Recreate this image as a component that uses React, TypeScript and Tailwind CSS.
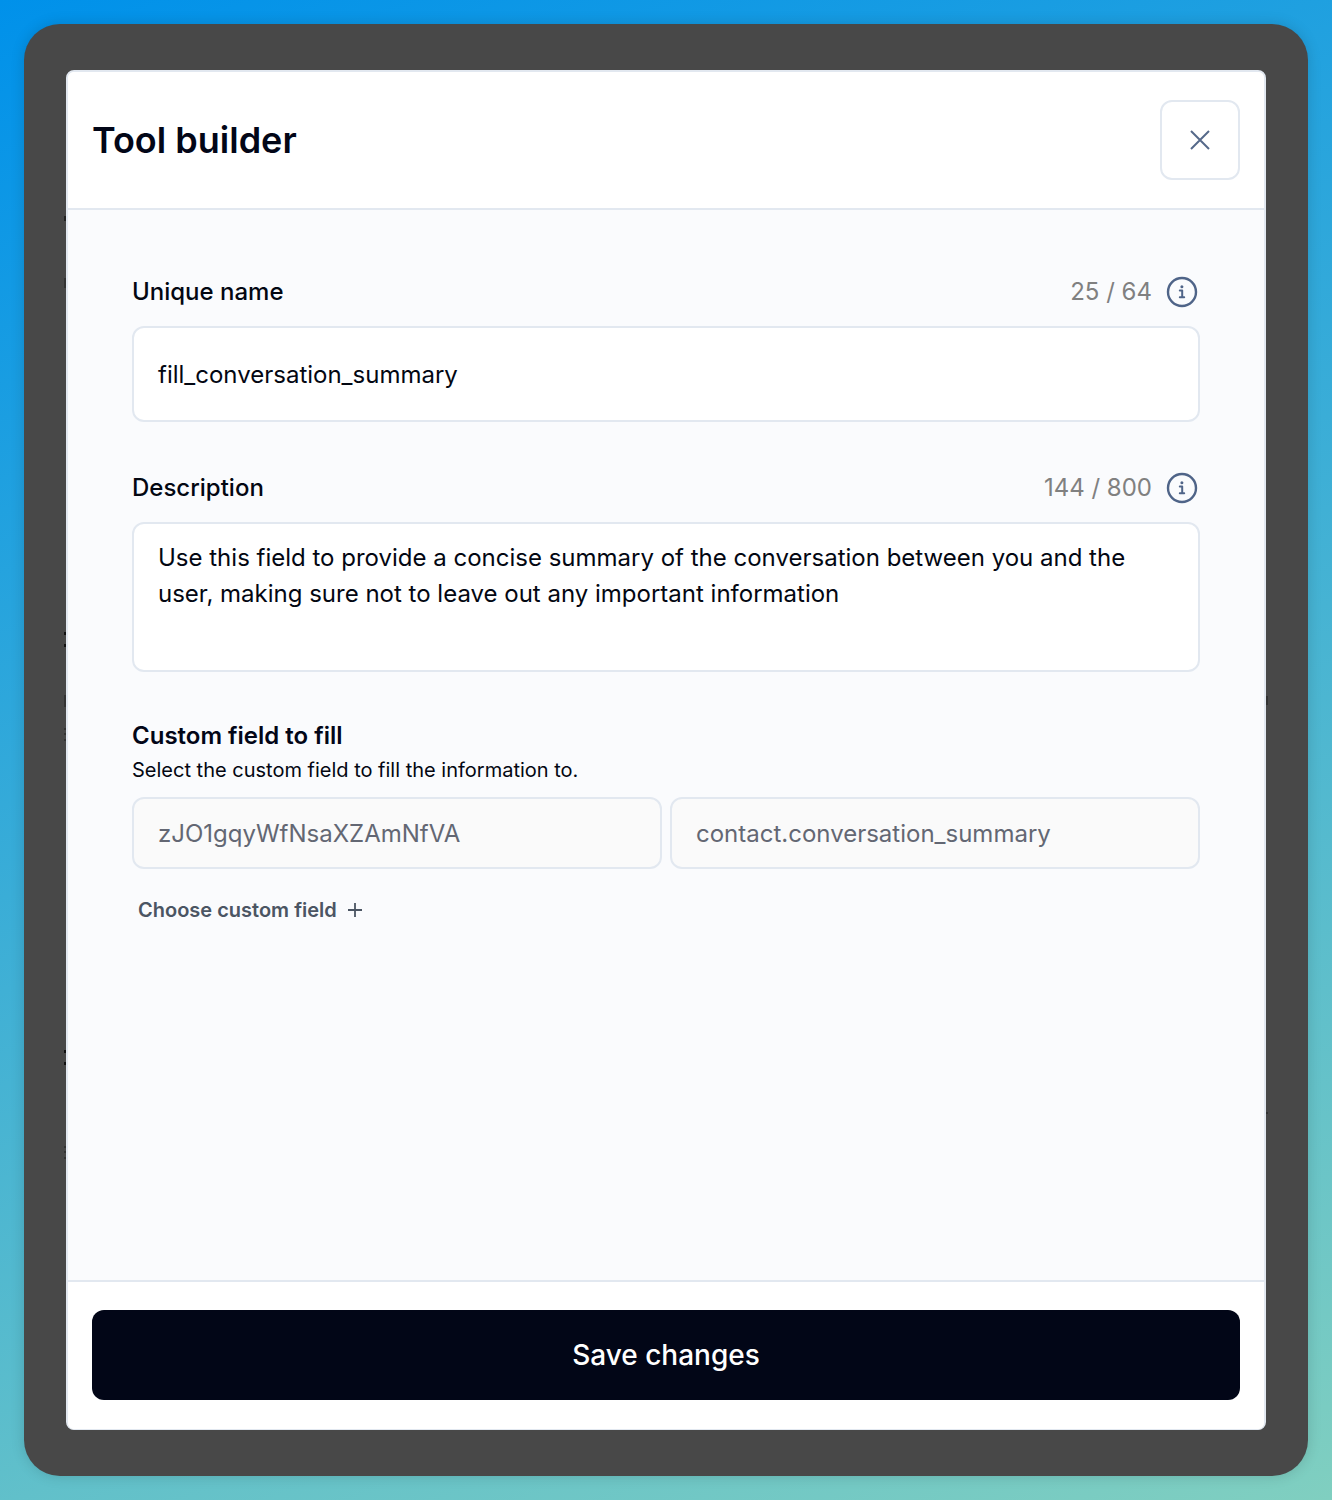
import React from "react";

const Info = () => (
  <svg width="32" height="32" viewBox="0 0 32 32" fill="none" className="shrink-0">
    <circle cx="16" cy="16" r="14" stroke="#4f6488" strokeWidth="2.4" />
    <path d="M13.8 14.6h2.4v6.4M13.8 21.2h4.4" stroke="#4f6488" strokeWidth="2" strokeLinecap="round" strokeLinejoin="round" />
    <circle cx="15.9" cy="10.8" r="1.5" fill="#4f6488" />
  </svg>
);

const Label = ({ title, count }: { title: string; count: string }) => (
  <div className="flex items-center justify-between h-8 mb-[18px]">
    <span className="text-[24px] font-medium leading-8 text-[#030712]">{title}</span>
    <div className="flex items-center gap-[14px] mr-[2px]">
      <span className="text-[24px] leading-8 text-[#808080]">{count}</span>
      <Info />
    </div>
  </div>
);

export default function App() {
  return (
    <div
      className="w-[1332px] h-[1500px] p-6 bg-[linear-gradient(160deg,#0091ea,#80cfc0)]"
      style={{ fontFamily: "Inter, 'Liberation Sans', sans-serif" }}
    >
      <div className="relative h-[1452px] rounded-[36px] bg-[#484848] px-[42px] pt-[46px] pb-[46px] shadow-[0_0_14px_rgba(0,0,0,0.15)]">
        <div className="h-[1360px] rounded-lg border-2 border-b border-[#e2e8f0] bg-white flex flex-col overflow-hidden">
          <header className="h-[138px] shrink-0 border-b-2 border-[#e2e8f0] flex items-center justify-between pl-6 pr-6 bg-white">
            <h1 className="text-[36px] font-semibold leading-[44px] text-[#020617]">Tool builder</h1>
            <button className="w-20 h-20 rounded-xl border-2 border-[#e2e8f0] bg-white flex items-center justify-center">
              <svg width="22" height="22" viewBox="0 0 22 22" fill="none">
                <path d="M2 2l18 18M20 2L2 20" stroke="#55698a" strokeWidth="2" />
              </svg>
            </button>
          </header>

          <main className="flex-1 bg-[#fafbfd] px-[64px] pt-[66px]">
            <Label title="Unique name" count="25 / 64" />
            <div className="h-24 rounded-xl border-2 border-[#e2e8f0] bg-white flex items-center px-6 pt-[2px] text-[24px] text-[#030712]">
              fill_conversation_summary
            </div>

            <div className="mt-[50px]">
              <Label title="Description" count="144 / 800" />
            </div>
            <div className="h-[150px] rounded-xl border-2 border-[#e2e8f0] bg-white px-6 pt-[16px] text-[24px] leading-9 text-[#030712]">
              Use this field to provide a concise summary of the conversation between you and the user, making sure not to leave out any important information
            </div>

            <h2 className="mt-[48px] text-[24px] font-semibold leading-8 text-[#020617]">Custom field to fill</h2>
            <p className="mt-[2px] text-[20px] leading-8 text-[#030712]">Select the custom field to fill the information to.</p>
            <div className="mt-[11px] grid grid-cols-2 gap-2">
              <div className="h-[72px] rounded-xl border-2 border-[#e2e8f0] bg-[#fafafa] flex items-center px-6 pt-[2px] text-[24px] text-[#636773]">zJO1gqyWfNsaXZAmNfVA</div>
              <div className="h-[72px] rounded-xl border-2 border-[#e2e8f0] bg-[#fafafa] flex items-center px-6 pt-[2px] text-[24px] text-[#636773]">contact.conversation_summary</div>
            </div>
            <div className="mt-[25px] ml-[6px] flex items-center gap-[10px] h-8">
              <span className="text-[20px] font-semibold leading-8 text-[#4b5563]">Choose custom field</span>
              <svg width="16" height="16" viewBox="0 0 16 16" fill="none">
                <path d="M8 1v14M1 8h14" stroke="#4b5563" strokeWidth="1.8" />
              </svg>
            </div>
          </main>

          <footer className="h-[149px] shrink-0 border-t-2 border-[#e2e8f0] bg-white px-6 pt-[28px]">
            <button className="w-full h-[90px] rounded-xl bg-[#020617] text-white text-[28px] font-medium flex items-center justify-center">
              Save changes
            </button>
          </footer>
        </div>

        {/* slivers of the page behind the modal, showing at its edges */}
        <svg className="absolute left-[40px] top-0 pointer-events-none" width="2" height="1452">
          <g fill="#222222">
            <rect y="192" width="2" height="5" />
            <rect y="608" width="2" height="3" fill="#111111" />
            <rect y="620" width="2" height="3" fill="#111111" />
            <rect y="1026" width="2" height="3" fill="#111111" />
            <rect y="1038" width="2" height="3" fill="#111111" />
          </g>
          <g fill="#333333">
            <rect y="254" width="2" height="10" />
            <rect y="671" width="2" height="12" />
            <rect y="704" width="2" height="2" />
            <rect y="709" width="2" height="2" />
            <rect y="715" width="2" height="2" />
            <rect y="1122" width="2" height="2" />
            <rect y="1127" width="2" height="2" />
            <rect y="1133" width="2" height="2" />
          </g>
        </svg>
        <svg className="absolute left-[1242px] top-0 pointer-events-none" width="2" height="1452">
          <g fill="#333333">
            <rect y="672" width="2" height="9" />
            <rect y="1088" width="2" height="2" />
          </g>
        </svg>
      </div>
    </div>
  );
}
